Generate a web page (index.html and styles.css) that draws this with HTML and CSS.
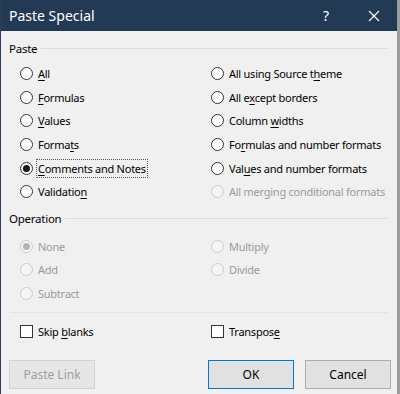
FILE: index.html
```html
<!DOCTYPE html>
<html lang="en">
<head>
    <meta charset="UTF-8">
    <meta name="viewport" content="width=device-width, initial-scale=1.0">
    <title>Paste Special</title>
    <link rel="stylesheet" href="styles.css">
</head>
<body>
    <div class="dialog">
        <div class="title-bar">
            <span class="title">Paste Special</span>
            <span class="help">?</span>
            <span class="close">
                <svg width="12" height="12" viewBox="0 0 12 12"><path d="M1 1 L11 11 M11 1 L1 11" stroke="#fff" stroke-width="1.1" fill="none"/></svg>
            </span>
        </div>

        <div class="content">
            <div class="group-label">Paste</div>
            <div class="options">
                <label class="option"><span class="radio"></span><span><u>A</u>ll</span></label>
                <label class="option"><span class="radio"></span><span>All using Source t<u>h</u>eme</span></label>
                <label class="option"><span class="radio"></span><span><u>F</u>ormulas</span></label>
                <label class="option"><span class="radio"></span><span>All e<u>x</u>cept borders</span></label>
                <label class="option"><span class="radio"></span><span><u>V</u>alues</span></label>
                <label class="option"><span class="radio"></span><span>Column <u>w</u>idths</span></label>
                <label class="option"><span class="radio"></span><span>Forma<u>t</u>s</span></label>
                <label class="option"><span class="radio"></span><span>Fo<u>r</u>mulas and number formats</span></label>
                <label class="option"><span class="radio checked"></span><span class="focused"><u>C</u>omments and Notes</span></label>
                <label class="option"><span class="radio"></span><span>Val<u>u</u>es and number formats</span></label>
                <label class="option"><span class="radio"></span><span>Validatio<u>n</u></span></label>
                <label class="option disabled"><span class="radio"></span><span>All merging conditional formats</span></label>
            </div>

            <div class="group-label second">Operation</div>
            <div class="options operation">
                <label class="option disabled"><span class="radio checked"></span><span>None</span></label>
                <label class="option disabled"><span class="radio"></span><span>Multiply</span></label>
                <label class="option disabled"><span class="radio"></span><span>Add</span></label>
                <label class="option disabled"><span class="radio"></span><span>Divide</span></label>
                <label class="option disabled"><span class="radio"></span><span>Subtract</span></label>
            </div>

            <div class="separator"></div>

            <div class="checks">
                <label class="option"><span class="checkbox"></span><span>Skip <u>b</u>lanks</span></label>
                <label class="option"><span class="checkbox"></span><span>Transpos<u>e</u></span></label>
            </div>

            <div class="buttons">
                <button class="btn" disabled>Paste Link</button>
                <span class="spacer"></span>
                <button class="btn default">OK</button>
                <button class="btn">Cancel</button>
            </div>
        </div>
    </div>
</body>
</html>
```

FILE: styles.css
```css
body {
    margin: 0;
    padding: 0;
    background-color: #f0f0f0;
    font-family: "Noto Sans", "Open Sans", sans-serif;
    font-size: 11px;
    letter-spacing: -0.25px;
    color: #000;
}

.dialog {
    width: 400px;
    height: 394px;
    box-sizing: border-box;
    border-left: 1px solid #2b3f58;
    border-right: 3px solid #9a9da2;
    background-color: #f0f0f0;
    overflow: hidden;
}

.title-bar {
    height: 31px;
    background-color: #233a55;
    color: #fff;
    display: flex;
    align-items: center;
    letter-spacing: 0;
}

.title {
    font-size: 14px;
    padding-left: 8px;
    flex: 1;
}

.help {
    font-size: 14px;
    width: 50px;
    text-align: center;
    margin-top: -1px;
}

.close {
    width: 46px;
    display: flex;
    justify-content: center;
}

.content {
    padding: 0 6px 0 8px;
}

.group-label {
    display: flex;
    align-items: center;
    height: 20px;
    margin-top: 7px;
    font-size: 11.5px;
}

.group-label.second {
    margin-top: 5px;
}

.group-label::after {
    content: "";
    flex: 1;
    height: 1px;
    background-color: #dcdcdc;
    margin-left: 4px;
    margin-right: 3px;
}

.options {
    display: grid;
    grid-template-columns: 191px 1fr;
    padding-left: 11px;
    margin-top: 4px;
}

.options.operation {
    margin-top: 6px;
}

.option {
    display: flex;
    align-items: center;
    height: 23.6px;
    white-space: nowrap;
}

.option u {
    text-decoration-thickness: 1px;
    text-underline-offset: 2px;
}

.radio {
    width: 13px;
    height: 13px;
    box-sizing: border-box;
    border: 1px solid #333;
    border-radius: 50%;
    background-color: #fff;
    margin-right: 5px;
    display: flex;
    align-items: center;
    justify-content: center;
    flex-shrink: 0;
}

.radio.checked::after {
    content: "";
    width: 7px;
    height: 7px;
    border-radius: 50%;
    background-color: #1a1a1a;
}

.checkbox {
    width: 13px;
    height: 13px;
    box-sizing: border-box;
    border: 1px solid #333;
    background-color: #fff;
    margin-right: 5px;
    flex-shrink: 0;
}

.focused {
    outline: 1px dotted #555;
    outline-offset: 0;
    padding: 1px 1px;
    margin-left: -1px;
}

.option.disabled {
    color: #9a9a9a;
}

.option.disabled .radio {
    border-color: #cccccc;
    background-color: #f5f5f5;
}

.option.disabled .radio.checked::after {
    background-color: #b4b4b4;
}

.separator {
    height: 1px;
    background-color: #e3e3e3;
    margin: 7px 3px 0 1px;
}

.checks {
    display: grid;
    grid-template-columns: 191px 1fr;
    padding-left: 11px;
    margin-top: 6px;
}

.buttons {
    display: flex;
    gap: 11px;
    margin-top: 17px;
}

.spacer {
    flex: 1;
}

.btn {
    width: 86px;
    height: 29px;
    font-family: inherit;
    font-size: 12px;
    letter-spacing: 0;
    color: #000;
    background-color: #e1e1e1;
    border: 1px solid #adadad;
    padding: 0;
}

.btn.default {
    border-color: #0078d7;
}

.btn:disabled {
    color: #a0a0a0;
    background-color: #e6e6e6;
    border-color: #d2d2d2;
}
```
